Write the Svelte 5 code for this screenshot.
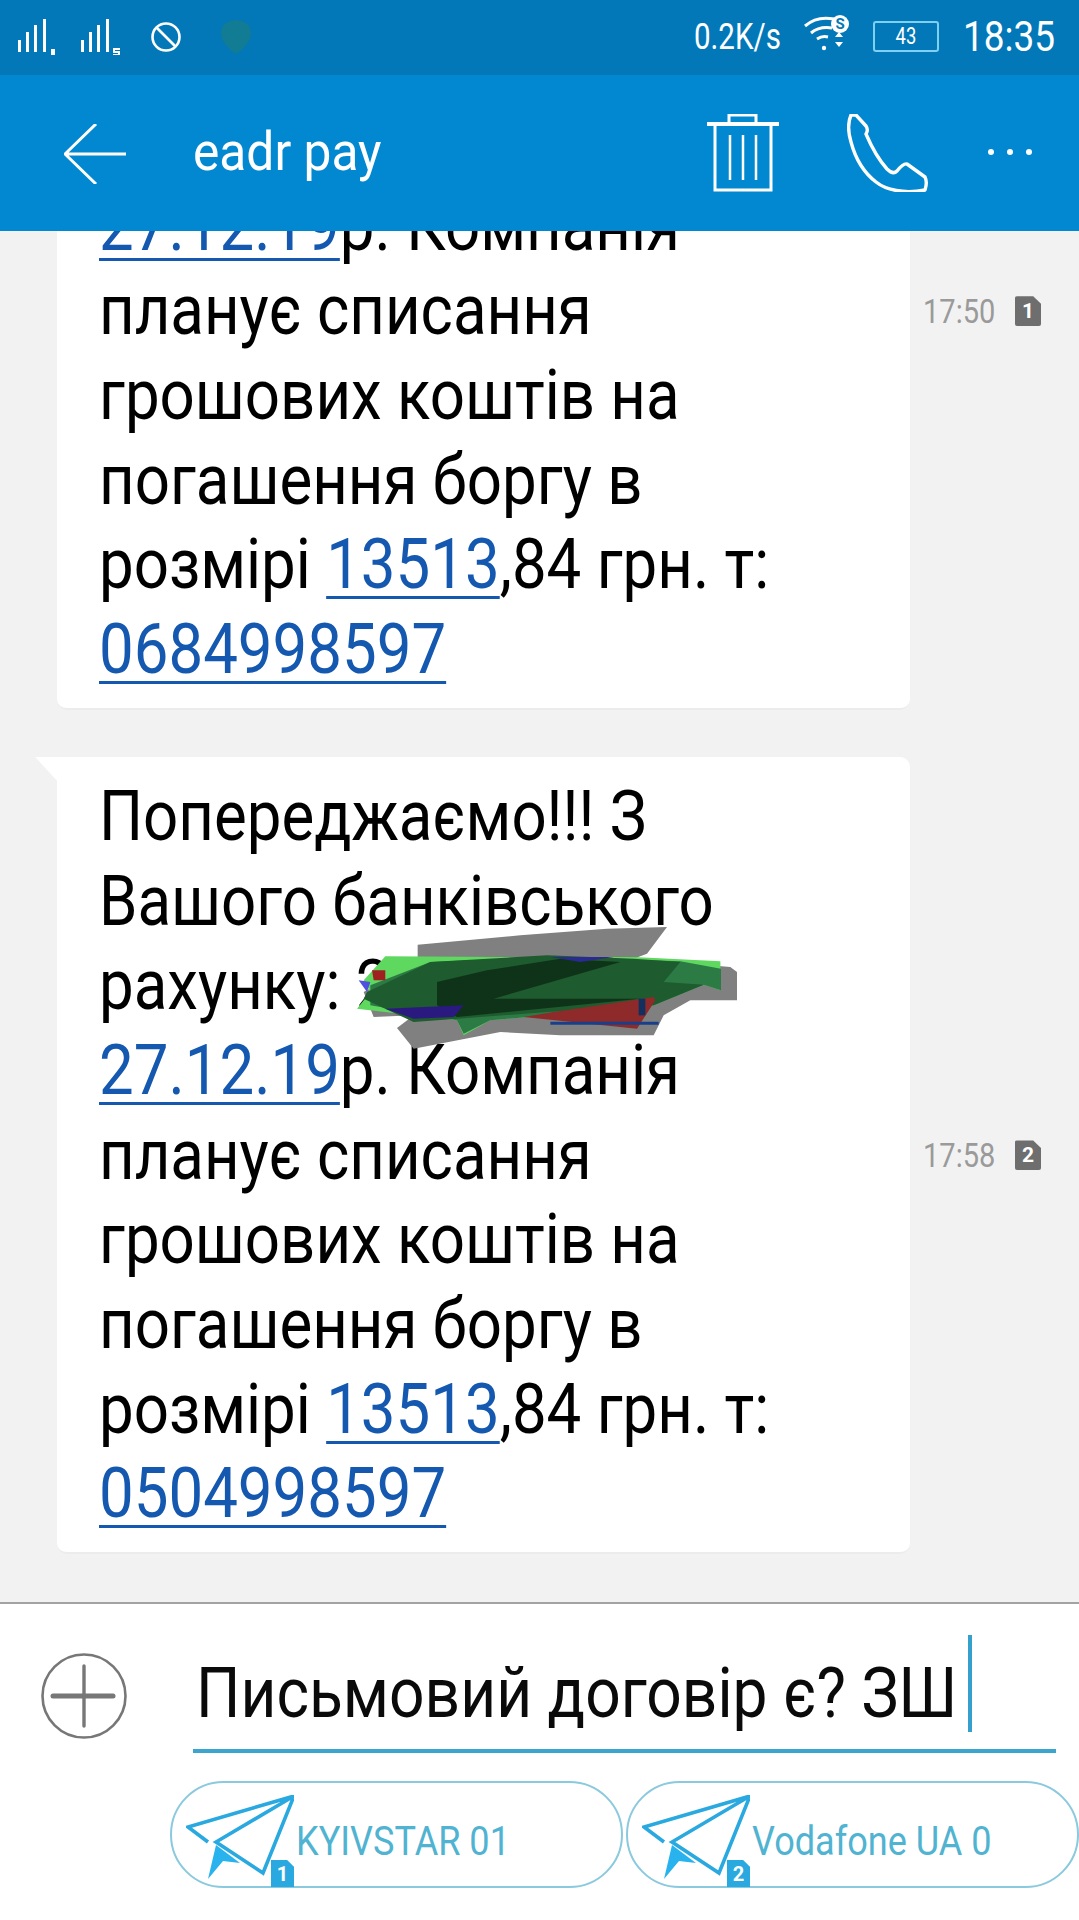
<script>
  const messages = [
    { time: '17:50', sim: '1', lines: [
      ['Попереджаємо!!! З'], ['Вашого банківського'], ['рахунку: 2*'],
      [{ link: '27.12.19' }, 'р. Компанія'], ['планує списання'], ['грошових коштів на'],
      ['погашення боргу в'], ['розмірі ', { link: '13513' }, ',84 грн. т:'], [{ link: '0684998597' }]
    ]},
    { time: '17:58', sim: '2', scribble: true, lines: [
      ['Попереджаємо!!! З'], ['Вашого банківського'], ['рахунку: 2*'],
      [{ link: '27.12.19' }, 'р. Компанія'], ['планує списання'], ['грошових коштів на'],
      ['погашення боргу в'], ['розмірі ', { link: '13513' }, ',84 грн. т:'], [{ link: '0504998597' }]
    ]}
  ];
  const sims = [{ n: '1', label: 'KYIVSTAR 01' }, { n: '2', label: 'Vodafone UA 0' }];
</script>

<div class="phone">
  <div class="status">
    <svg class="ic-signal" viewBox="0 0 45 36" width="45" height="36"><g fill="#fff"><rect x="0" y="21" width="3" height="12"/><rect x="8" y="13" width="3" height="20"/><rect x="16" y="6" width="3" height="27"/><rect x="25" y="0" width="3" height="33"/><rect x="33" y="30" width="4" height="6"/></g></svg>
    <svg class="ic-signal" viewBox="0 0 45 36" width="45" height="36"><g fill="#fff"><rect x="0" y="21" width="3" height="12"/><rect x="8" y="13" width="3" height="20"/><rect x="16" y="6" width="3" height="27"/><rect x="25" y="0" width="3" height="33"/><path d="M32 29h7v2h-5v1h5v5h-7v-2h5v-1h-5z"/></g></svg>
    <svg class="ic-block" viewBox="0 0 32 32" width="32" height="32"><circle cx="16" cy="16" r="13.5" fill="none" stroke="#fff" stroke-width="2.6"/><path d="M7 7l18 18" stroke="#fff" stroke-width="2.6"/></svg>
    <svg class="ic-shield" viewBox="0 0 32 34" width="32" height="34"><path d="M16 0c8 0 15 5 15 13 0 9-8 16-15 21C9 29 1 22 1 13 1 5 8 0 16 0z" fill="#117c94"/></svg>
    <span class="speed">0.2K/s</span>
    <svg class="ic-wifi" viewBox="0 0 46 36" width="46" height="36"><g fill="none" stroke="#fff" stroke-width="3"><path d="M1 11C9 4 20 2 30 4"/><path d="M7 18c6-5 14-6 21-5"/><path d="M13 24c3-2 7-3 11-2"/></g><circle cx="36" cy="9" r="9" fill="#fff"/><text x="36" y="14" class="wifi-s">S</text><path d="M31 22l4-5 4 5zM31 27l4 5 4-5z" fill="#fff"/><circle cx="20" cy="33" r="2.2" fill="#fff"/></svg>
    <div class="battery"><span>43</span></div>
    <span class="clock">18:35</span>
  </div>

  <header class="bar">
    <svg class="ic-back" viewBox="0 0 62 60" width="62" height="60"><path d="M32 0L1 30l31 30M1 30h61" fill="none" stroke="#fff" stroke-width="3"/></svg>
    <span class="title">eadr pay</span>
    <svg class="ic-trash" viewBox="0 0 72 78" width="72" height="78"><g fill="none" stroke="#fff" stroke-width="3"><path d="M0 10h72" stroke-width="4"/><path d="M22 9V1h27v8"/><path d="M8 10v66h56V10"/><path d="M23 21v45M36 21v45M49 21v45" stroke-width="2.5"/></g></svg>
    <svg class="ic-phone" viewBox="0 0 82 78" width="82" height="78"><path d="M4 1C1 8 1 18 4 28c4 15 12 30 25 40 10 8 28 12 49 8 2-6 2-9 0-13L60 50c-3-1-6 2-10 7-3 3-6 2-10-2C32 46 25 34 19 20 21 17 21 15 19 12L9 1z" fill="none" stroke="#fff" stroke-width="3.4" stroke-linejoin="round"/></svg>
    <div class="dots"><i></i><i></i><i></i></div>
  </header>

  <main class="thread">
    {#each messages as m}
      <div class="row">
        <div class="bubble">
          <div class="text">
            {#each m.lines as line}
              <div class="line">
                {#each line as part}
                  {#if typeof part === 'string'}{part}{:else}<span class="link">{part.link}</span>{/if}
                {/each}
              </div>
            {/each}
          </div>
          {#if m.scribble}
            <svg class="scribble" viewBox="100 0 1170 470" width="390" height="156.7">
              <polygon fill="#808080" points="312,128 620,100 880,80 1060,75 1000,155 960,170 1250,195 1270,210 1270,295 1130,295 1050,340 1020,400 740,400 560,390 300,440 250,378 300,340 180,345 150,270 312,180"/>
              <polygon fill="#5fd85f" points="215,163 560,165 960,165 1220,178 1222,265 1170,248 1020,310 700,340 530,355 450,400 430,355 130,320 170,270 150,235"/>
              <polygon fill="#2c7a44" points="170,250 350,180 700,165 1100,178 1222,200 1222,265 1170,248 1020,310 700,340 530,355 450,395 430,355 170,310"/>
              <polygon fill="#1e5b2e" points="160,270 350,180 700,160 960,170 1100,180 1050,240 1170,248 1020,310 700,330 300,360 150,290"/>
              <polygon fill="#0f3319" points="370,240 520,205 740,170 920,180 540,290 980,290 430,345 370,310"/>
              <polygon fill="#8e2a2a" points="630,345 720,330 1020,285 1025,295 970,380"/>
              <polygon fill="#2a1a80" points="215,320 450,310 420,345 300,350"/>
              <polygon fill="#5050e0" points="135,235 170,240 160,270"/>
              <polygon fill="#2a2a90" points="710,165 900,165 800,180"/>
              <polygon fill="#a02020" points="175,205 215,205 215,235 180,235"/>
              <polygon fill="#1a3f8a" points="710,359 1035,359 1035,368 710,368"/>
              <polygon fill="#12305f" points="975,290 995,290 995,340 975,340"/>
            </svg>
          {/if}
        </div>
        <div class="meta">
          <span class="time">{m.time}</span>
          <span class="sim-tag">{m.sim}</span>
        </div>
      </div>
    {/each}
  </main>

  <footer class="composer">
    <div class="input-row">
      <svg class="ic-plus" viewBox="0 0 86 86" width="86" height="86"><circle cx="43" cy="43" r="41.5" fill="none" stroke="#777" stroke-width="2.6"/><path d="M12 43h60" stroke="#777" stroke-width="5" stroke-linecap="round"/><path d="M43 13v60" stroke="#777" stroke-width="3.4" stroke-linecap="round"/></svg>
      <div class="input">
        <span class="typed">Письмовий договір є? ЗШ</span>
        <i class="caret"></i>
      </div>
    </div>
    <div class="send-row">
      {#each sims as s}
        <button class="send">
          <span class="plane">
            <svg viewBox="0 0 108 88" width="108" height="88">
              <g fill="none" stroke="#29a9df" stroke-width="3.6">
                <path d="M22 47L2 32 108 1 77 78 30 47 108 1"/>
              </g>
              <polygon fill="#29b3ee" points="22,84 30,50 54,68 37,66"/>
            </svg>
            <b class="badge">{s.n}</b>
          </span>
          <span class="send-label">{s.label}</span>
        </button>
      {/each}
    </div>
  </footer>
</div>

<style>
  :global(body) { margin: 0; background: #f2f2f2; }
  .phone {
    width: 1079px; height: 1920px; display: flex; flex-direction: column; overflow: hidden;
    font-family: Roboto, "Noto Sans", sans-serif; color: #000; background: #f2f2f2;
  }
  .status {
    flex: 0 0 75px; box-sizing: border-box; background: #0278b8; display: flex; align-items: center;
    padding: 0 24px 2px 18px; color: #fff;
  }
  .ic-signal { margin-right: 18px; flex: none; }
  .ic-block { margin: 0 38px 0 6px; flex: none; }
  .ic-shield { flex: none; }
  .speed {
    margin-left: auto; width: 92px; font-size: 36px; transform: scaleX(.82); transform-origin: left center; white-space: nowrap;
  }
  .ic-wifi { margin: 0 23px 8px 18px; flex: none; }
  .wifi-s { font: 700 15px Roboto, sans-serif; text-anchor: middle; fill: #0278b8; }
  .battery {
    width: 66px; height: 31px; box-sizing: border-box; border: 2px solid #7fd0f2; border-radius: 3px; display: flex;
    align-items: center; justify-content: center; margin-right: 24px;
  }
  .battery span { font-size: 23px; transform: scaleX(.8); }
  .clock { width: 92px; font-size: 42px; transform: scaleX(.88); transform-origin: left center; white-space: nowrap; }

  .bar {
    flex: 0 0 156px; box-sizing: border-box; background: #0288d1; display: flex; align-items: center; padding-left: 64px; color: #fff;
  }
  .ic-back { flex: none; margin: 1px 67px 0 0; }
  .title { flex: 1; font-size: 54px; transform: scaleX(.92); transform-origin: left center; white-space: nowrap; margin-bottom: 3px; }
  .ic-trash { flex: none; margin: 0 68px 1px 0; }
  .ic-phone { flex: none; margin: 1px 59px 1px 0; }
  .dots { display: flex; gap: 13px; margin-right: 47px; margin-bottom: 2px; }
  .dots i { width: 6px; height: 6px; border-radius: 50%; background: #fff; }

  .thread {
    flex: 1; min-height: 0; overflow: hidden; display: flex; flex-direction: column; justify-content: flex-end;
    gap: 47px; padding: 0 0 48px 57px;
  }
  .row { display: flex; align-items: center; flex: none; }
  .bubble {
    position: relative; width: 853px; box-sizing: border-box; background: #fff; border-radius: 0 10px 10px 10px;
    border-bottom: 2px solid #ececec; padding: 17px 0 16px 42px; flex: none;
  }
  .bubble::before {
    content: ""; position: absolute; left: -22px; top: 0; width: 22px; height: 24px; background: #fff;
    clip-path: polygon(0 0, 100% 0, 100% 100%);
  }
  .text { font-size: 71px; line-height: 84.7px; transform: scaleX(.87); transform-origin: left top; white-space: pre; }
  .line { height: 84.7px; }
  .link { color: #1558b0; text-decoration: underline; text-decoration-thickness: 3px; text-underline-offset: 8px; }
  .scribble { position: absolute; left: 290px; top: 145px; }
  .meta { display: flex; align-items: center; margin-left: 13px; }
  .time { font-size: 33px; color: #9a9a9a; transform: scaleX(.88); transform-origin: left center; width: 78px; }
  .sim-tag {
    width: 26px; height: 30px; margin-left: 14px; background: #6e6e6e; color: #fff; font-size: 21px; font-weight: 700;
    display: flex; align-items: center; justify-content: center; clip-path: polygon(0 0, 70% 0, 100% 25%, 100% 100%, 0 100%); border-radius: 2px;
  }

  .composer { flex: 0 0 318px; box-sizing: border-box; background: #fff; border-top: 2px solid #a3a3a3; display: flex; flex-direction: column; }
  .input-row { display: flex; align-items: flex-start; padding: 31px 23px 0 41px; }
  .ic-plus { flex: none; margin: 18px 66px 0 0; }
  .input {
    flex: 1; height: 114px; border-bottom: 4px solid #3ba5d0; display: flex; align-items: flex-start; position: relative;
  }
  .typed {
    font-size: 70px; line-height: 100px; margin-top: 8px; margin-left: 3px; transform: scaleX(.89); transform-origin: left center; white-space: nowrap; color: #0a0a0a;
  }
  .caret { position: absolute; left: 775px; top: 0; width: 4px; height: 97px; background: #35a0cc; }
  .send-row { display: flex; gap: 3px; padding: 28px 0 0 170px; }
  .send {
    width: 453px; height: 107px; box-sizing: border-box; border: 2px solid #8ac9de; border-radius: 54px; background: #fff;
    display: flex; align-items: flex-start; padding: 12px 0 0 14px; font: inherit; color: #4fb3d1;
  }
  .plane { position: relative; flex: none; width: 110px; height: 88px; }
  .plane svg { display: block; }
  .badge {
    position: absolute; right: 2px; bottom: -4px; width: 23px; height: 27px; background: #29a9df; color: #fff; font-size: 20px; font-weight: 700;
    display: flex; align-items: center; justify-content: center; clip-path: polygon(0 0, 70% 0, 100% 25%, 100% 100%, 0 100%);
  }
  .send-label { font-size: 41px; line-height: 48px; margin-top: 22px; transform: scaleX(.88); transform-origin: left center; white-space: nowrap; }
</style>
